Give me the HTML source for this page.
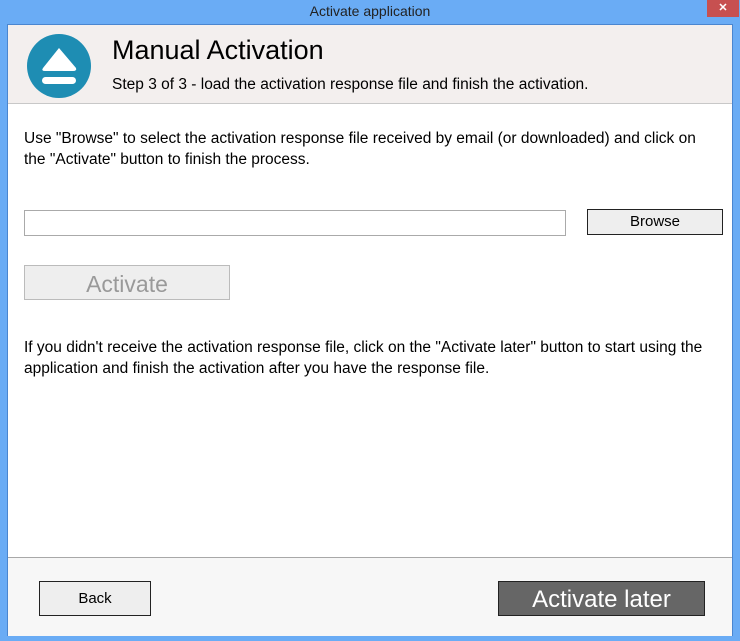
<!DOCTYPE html>
<html><head><style>
*{margin:0;padding:0;box-sizing:border-box}
body{width:740px;height:641px;background:#6aacf5;font-family:"Liberation Sans",sans-serif;position:relative;overflow:hidden;color:#000}
.abs{position:absolute}
#title{left:0;top:3px;width:740px;text-align:center;font-size:14px;color:#222}
#close{left:707px;top:0;width:32px;height:17px;background:#c75050;color:#fff;font-size:11px;font-weight:bold;text-align:center;line-height:16px}
#win{left:7px;top:24px;width:726px;height:612px;background:#fff;border:1px solid #4a86d0}
#hdr{left:0;top:0;width:724px;height:79px;background:#f3efee;border-bottom:1px solid #c8c8c8}
#foot{left:0;top:532px;width:724px;height:79px;background:#f7f7f7;border-top:1px solid #a8a8a8}
.t{font-size:15.5px;line-height:21px;white-space:nowrap}
.btn{border:1px solid #222;background:#eee;text-align:center;font-size:15px}
</style></head><body>
<div id="title" class="abs">Activate application</div>
<div id="close" class="abs">✕</div>
<div id="win" class="abs">
 <div id="hdr" class="abs">
  <svg class="abs" style="left:18px;top:8px" width="66" height="66" viewBox="0 0 66 66">
   <circle cx="33" cy="33" r="32" fill="#1e8db3"/>
   <path d="M33 15 L50 35 Q51 38 47 38 L19 38 Q15 38 17 35 Z" fill="#fff"/>
   <rect x="16" y="44" width="34" height="7" rx="3.5" fill="#fff"/>
  </svg>
  <div class="abs" style="left:104px;top:10px;font-size:27px">Manual Activation</div>
  <div class="abs t" style="left:104px;top:49px">Step 3 of 3 - load the activation response file and finish the activation.</div>
 </div>
 <div class="abs t" style="left:16px;top:103px">Use "Browse" to select the activation response file received by email (or downloaded) and click on<br>the "Activate" button to finish the process.</div>
 <div class="abs" style="left:16px;top:185px;width:542px;height:26px;border:1px solid #aaa;background:#fff"></div>
 <div class="abs btn" style="left:579px;top:184px;width:136px;height:26px;line-height:24px">Browse</div>
 <div class="abs" style="left:16px;top:240px;width:206px;height:35px;border:1px solid #bbb;background:#eee;color:#999;font-size:23px;text-align:center;line-height:37px">Activate</div>
 <div class="abs t" style="left:16px;top:312px">If you didn't receive the activation response file, click on the "Activate later" button to start using the<br>application and finish the activation after you have the response file.</div>
 <div id="foot" class="abs">
  <div class="abs btn" style="left:31px;top:23px;width:112px;height:35px;line-height:33px">Back</div>
  <div class="abs" style="left:490px;top:23px;width:207px;height:35px;background:#666;border:1px solid #222;color:#fff;font-size:24px;text-align:center;line-height:35px">Activate later</div>
 </div>
</div>
</body></html>
